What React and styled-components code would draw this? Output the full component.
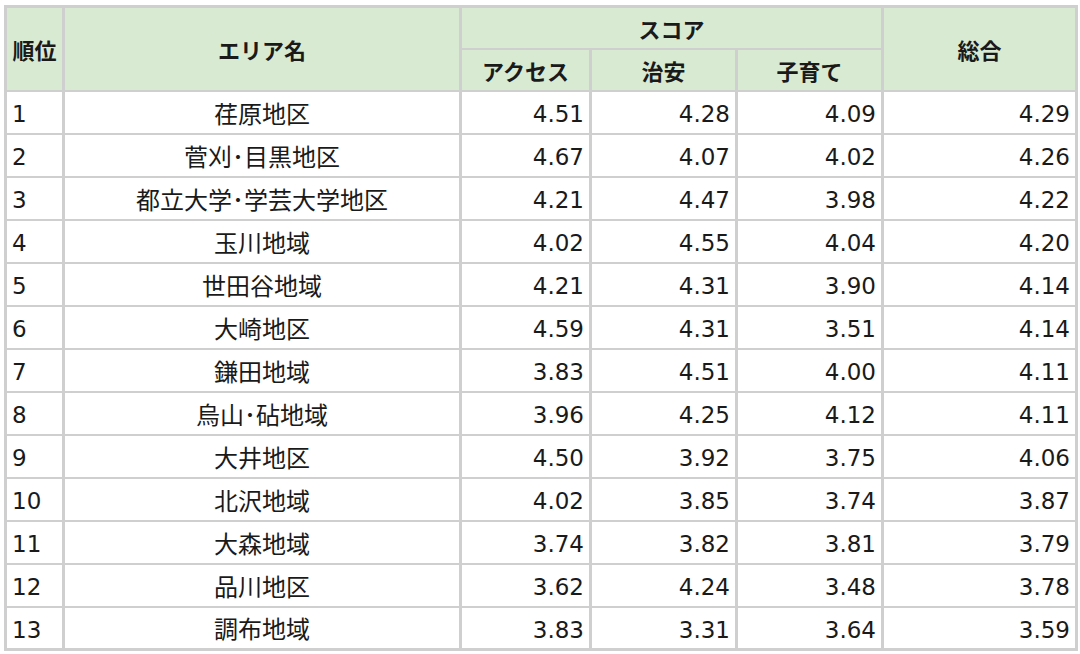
import React from 'react'
import styled, { createGlobalStyle } from 'styled-components'

const rows = [
  ['1', '荏原地区', '4.51', '4.28', '4.09', '4.29'],
  ['2', '菅刈･目黒地区', '4.67', '4.07', '4.02', '4.26'],
  ['3', '都立大学･学芸大学地区', '4.21', '4.47', '3.98', '4.22'],
  ['4', '玉川地域', '4.02', '4.55', '4.04', '4.20'],
  ['5', '世田谷地域', '4.21', '4.31', '3.90', '4.14'],
  ['6', '大崎地区', '4.59', '4.31', '3.51', '4.14'],
  ['7', '鎌田地域', '3.83', '4.51', '4.00', '4.11'],
  ['8', '烏山･砧地域', '3.96', '4.25', '4.12', '4.11'],
  ['9', '大井地区', '4.50', '3.92', '3.75', '4.06'],
  ['10', '北沢地域', '4.02', '3.85', '3.74', '3.87'],
  ['11', '大森地域', '3.74', '3.82', '3.81', '3.79'],
  ['12', '品川地区', '3.62', '4.24', '3.48', '3.78'],
  ['13', '調布地域', '3.83', '3.31', '3.64', '3.59'],
]

function App() {
  return (
    <Page>
      <GlobalStyle />
      <Table>
        <colgroup>
          <col style={{ width: 58 }} />
          <col style={{ width: 397 }} />
          <col style={{ width: 130 }} />
          <col style={{ width: 146 }} />
          <col style={{ width: 146 }} />
          <col style={{ width: 194 }} />
        </colgroup>
        <thead>
          <HeadRow>
            <Th rowSpan={2}>順位</Th>
            <Th rowSpan={2}>エリア名</Th>
            <Th colSpan={3}>スコア</Th>
            <Th rowSpan={2}>総合</Th>
          </HeadRow>
          <HeadRow>
            <Th>アクセス</Th>
            <Th>治安</Th>
            <Th>子育て</Th>
          </HeadRow>
        </thead>
        <tbody>
          {rows.map(r => (
            <Row key={r[0]}>
              <Cell $align="left">{r[0]}</Cell>
              <Cell $align="center" $cjk>{r[1]}</Cell>
              <Cell>{r[2]}</Cell>
              <Cell>{r[3]}</Cell>
              <Cell>{r[4]}</Cell>
              <Cell>{r[5]}</Cell>
            </Row>
          ))}
        </tbody>
      </Table>
    </Page>
  )
}

export default App

const GlobalStyle = createGlobalStyle`
    body {
        margin: 0;
        background: #fff;
    }
`
const Page = styled.div`
    padding: 5px 4px;
    font-family: "DejaVu Sans", "Noto Sans CJK JP", sans-serif;
    color: #1a1a1a;
`
const Table = styled.table`
    border-collapse: collapse;
    table-layout: fixed;
    width: 1072px;
    border: 3px solid #cfcfcf;
`
const HeadRow = styled.tr`
    height: 42px;
`
const Th = styled.th`
    background: #d9ead3;
    font-family: "Noto Sans CJK JP", sans-serif;
    font-weight: 700;
    font-size: 22px;
    text-align: center;
    vertical-align: middle;
    padding: 0 4px;
    border-left: 3px solid #cfcfcf;
    border-right: 3px solid #cfcfcf;
    border-top: 2px solid #cfcfcf;
    border-bottom: 2px solid #cfcfcf;
    white-space: nowrap;
`
const Row = styled.tr`
    height: 43px;
`
const Cell = styled.td`
    font-size: ${p => (p.$cjk ? '24px' : '23px')};
    text-align: ${p => p.$align || 'right'};
    vertical-align: middle;
    padding: 5px 5px 0 5px;
    border-left: 3px solid #cfcfcf;
    border-right: 3px solid #cfcfcf;
    border-top: 2px solid #cfcfcf;
    border-bottom: 2px solid #cfcfcf;
    white-space: nowrap;
    line-height: 1;
`
